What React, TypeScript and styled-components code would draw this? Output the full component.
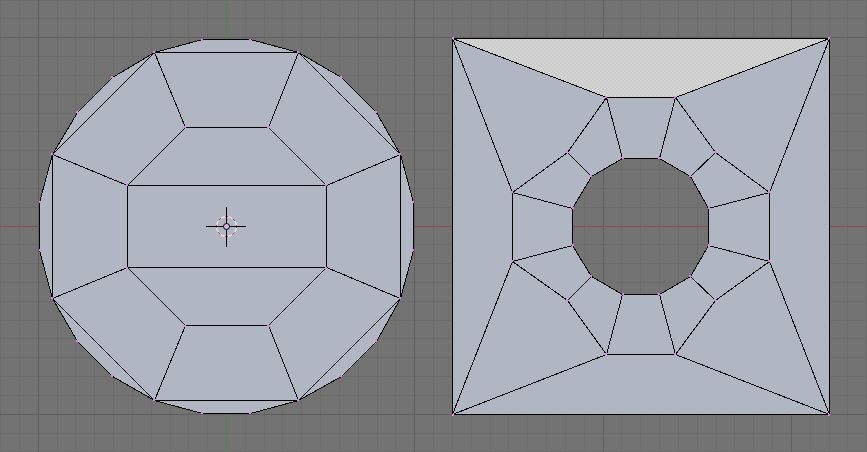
import React from "react";
import styled, { createGlobalStyle } from "styled-components";

const Global = createGlobalStyle`
  html, body { margin: 0; padding: 0; background: #737373; overflow: hidden; }
`;

const Viewport = styled.main`
  width: 867px;
  height: 452px;
  background: #737373;
  overflow: hidden;
`;

const Canvas = styled.svg`
  display: block;
  width: 867px;
  height: 452px;
`;

const CrispGroup = styled.g`
  shape-rendering: crispEdges;
`;

const Face = styled.path`
  fill: #b1b6c3;
`;

const StippleFace = styled.polygon`
  fill: url(#stipple);
`;

const Edge = styled.path`
  fill: none;
  stroke: #000;
  stroke-width: 1;
`;

const VertexDot = styled.rect`
  fill: #ff70ff;
`;

const GridLine = styled.rect<{ $major?: boolean }>`
  fill: ${(p) => (p.$major ? "#5f5f5f" : "#6c6c6c")};
`;

const AxisLine = styled.rect<{ $color: string }>`
  fill: ${(p) => p.$color};
`;

const CursorRing = styled.circle<{ $color: string }>`
  fill: none;
  stroke: ${(p) => p.$color};
  stroke-width: 1;
`;

const CursorCentre = styled.circle`
  fill: #dcb8e6;
  stroke: #000;
  stroke-width: 1;
`;

type P = [number, number];

const STEP = 18.83;
const ORIGIN = 226;

const gridValues = (max: number, snap: (n: number) => number) => {
  const out: { v: number; major: boolean }[] = [];
  for (let i = -20; i <= 60; i++) {
    const v = snap(ORIGIN + i * STEP);
    if (v >= 0 && v <= max && i !== 0) out.push({ v, major: i % 10 === 0 });
  }
  return out;
};

const outerLine: P[] = [
  [202, 39], [250, 39], [298, 52], [341, 77], [376, 112], [400, 154], [413, 202],
  [413, 250], [400, 298], [376, 341], [341, 376], [298, 400], [250, 413], [202, 413],
  [154, 400], [112, 376], [77, 341], [52, 298], [39, 250], [39, 202], [52, 154],
  [77, 112], [112, 77], [154, 52],
];

const outerDots: P[] = outerLine.map(([x, y]) => [x === 39 ? 40 : x, y === 39 ? 40 : y]);

const circleEdges: [P, P][] = [
  [[154, 52], [298, 52]], [[154, 400], [298, 400]],
  [[52, 154], [52, 298]], [[400, 154], [400, 298]],
  [[127, 185], [326, 185]], [[127, 267], [326, 267]],
  [[127, 185], [127, 267]], [[326, 185], [326, 267]],
  [[185, 127], [268, 127]], [[185, 325], [268, 325]],
  [[154, 52], [185, 127]], [[298, 52], [268, 127]],
  [[185, 127], [127, 185]], [[268, 127], [326, 185]],
  [[127, 185], [52, 154]], [[326, 185], [400, 154]],
  [[52, 154], [154, 52]], [[298, 52], [400, 154]],
  [[52, 298], [127, 267]], [[400, 298], [326, 267]],
  [[52, 298], [154, 400]], [[400, 298], [298, 400]],
  [[154, 400], [185, 325]], [[298, 400], [268, 325]],
  [[185, 325], [127, 267]], [[268, 325], [326, 267]],
];

const circleInnerDots: P[] = [
  [185, 127], [268, 127], [127, 185], [326, 185], [127, 268], [326, 268], [185, 326], [268, 326],
];

const square: P[] = [[452, 38], [829, 38], [829, 414], [452, 414]];
const squareDots: P[] = [[453, 38], [829, 38], [829, 415], [453, 415]];

const hole: P[] = [
  [622, 158], [659, 158], [690, 176], [708, 208], [708, 245], [690, 276],
  [659, 294], [622, 294], [591, 276], [572, 245], [572, 208], [591, 176],
];
const holeDots: P[] = hole.map(([x, y]) => [x === 572 ? 573 : x === 708 ? 709 : x === 622 ? 623 : x, y]);

const ring: P[] = [
  [606, 97], [675, 97], [715, 152], [769, 192], [769, 261], [715, 300],
  [675, 354], [606, 354], [567, 300], [512, 261], [512, 192], [567, 152],
];

const squareEdges: [P, P][] = [
  [[452, 38], [606, 97]], [[829, 38], [675, 97]],
  [[452, 414], [606, 354]], [[829, 414], [675, 354]],
  [[452, 38], [512, 192]], [[829, 38], [769, 192]],
  [[452, 414], [512, 261]], [[829, 414], [769, 261]],
  [[606, 97], [622, 158]], [[675, 97], [659, 158]],
  [[567, 152], [591, 176]], [[715, 152], [690, 176]],
  [[512, 192], [572, 208]], [[769, 192], [708, 208]],
  [[512, 261], [572, 245]], [[769, 261], [708, 245]],
  [[567, 300], [591, 276]], [[715, 300], [690, 276]],
  [[606, 354], [622, 294]], [[675, 354], [659, 294]],
];

const closed = (pts: P[]) => "M" + pts.map(([x, y]) => `${x} ${y}`).join("L") + "Z";
const segs = (list: [P, P][]) =>
  list.map(([a, b]) => `M${a[0]} ${a[1]}L${b[0]} ${b[1]}`).join("");

const Dots = ({ pts }: { pts: P[] }) => (
  <>
    {pts.map(([x, y]) => (
      <VertexDot key={`${x}-${y}`} x={x - 1} y={y - 1} width={2} height={2} />
    ))}
  </>
);

const Cursor = () => {
  const c = 226.5;
  return (
    <g>
      <CursorRing $color="#fff" cx={c} cy={c} r={10} />
      <CursorRing $color="#e00000" cx={c} cy={c} r={10} strokeDasharray="3 4.854" strokeDashoffset={1.5} />
      <path
        d={`M206 ${c}H224M229 ${c}H246M${c} 207V224M${c} 229V247`}
        stroke="#000"
        fill="none"
        shapeRendering="crispEdges"
      />
      <CursorCentre cx={c} cy={c} r={3} />
    </g>
  );
};

export default function App() {
  const xs = gridValues(867, Math.round);
  const ys = gridValues(452, Math.floor);
  return (
    <Viewport>
      <Global />
      <Canvas viewBox="0 0 867 452" xmlns="http://www.w3.org/2000/svg">
        <defs>
          <pattern id="stipple" width="4" height="4" patternUnits="userSpaceOnUse">
            <rect width="4" height="4" fill="#cccccc" />
            <rect x="0" y="0" width="1" height="1" fill="#e6e6e6" />
            <rect x="2" y="2" width="1" height="1" fill="#e6e6e6" />
          </pattern>
        </defs>
        <CrispGroup>
          {xs.filter((g) => !g.major).map((g) => (
            <GridLine key={`x${g.v}`} x={g.v} y={0} width={1} height={452} />
          ))}
          {ys.filter((g) => !g.major).map((g) => (
            <GridLine key={`y${g.v}`} x={0} y={g.v} width={867} height={1} />
          ))}
          {xs.filter((g) => g.major).map((g) => (
            <GridLine $major key={`X${g.v}`} x={g.v} y={0} width={1} height={452} />
          ))}
          {ys.filter((g) => g.major).map((g) => (
            <GridLine $major key={`Y${g.v}`} x={0} y={g.v} width={867} height={1} />
          ))}
          <AxisLine $color="#8f4a4a" x={0} y={226} width={867} height={1} />
          <AxisLine $color="#3f8f3f" x={226} y={0} width={1} height={452} />

          <g transform="translate(0.5 0.5)">
            <Face d={closed(outerLine)} />
            <Face fillRule="evenodd" d={closed(square) + closed(hole)} />
            <StippleFace points="452,38 829,38 675,97 606,97" />

            <Edge d={closed(outerLine)} />
            <Edge d={segs(circleEdges)} />
            <Edge d={closed(square)} />
            <Edge d={closed(hole)} />
            <Edge d={segs(squareEdges)} />
            <Edge
              d={segs([
                [[606, 97], [675, 97]], [[606, 354], [675, 354]],
                [[512, 192], [512, 261]], [[769, 192], [769, 261]],
                [[606, 97], [567, 152]], [[567, 152], [512, 192]],
                [[675, 97], [715, 152]], [[715, 152], [769, 192]],
                [[606, 354], [567, 300]], [[567, 300], [512, 261]],
                [[675, 354], [715, 300]], [[715, 300], [769, 261]],
              ])}
            />
          </g>
          <Dots pts={outerDots} />
          <Dots pts={circleInnerDots} />
          <Dots pts={squareDots} />
          <Dots pts={holeDots} />
          <Dots pts={ring} />
        </CrispGroup>
        <Cursor />
      </Canvas>
    </Viewport>
  );
}
